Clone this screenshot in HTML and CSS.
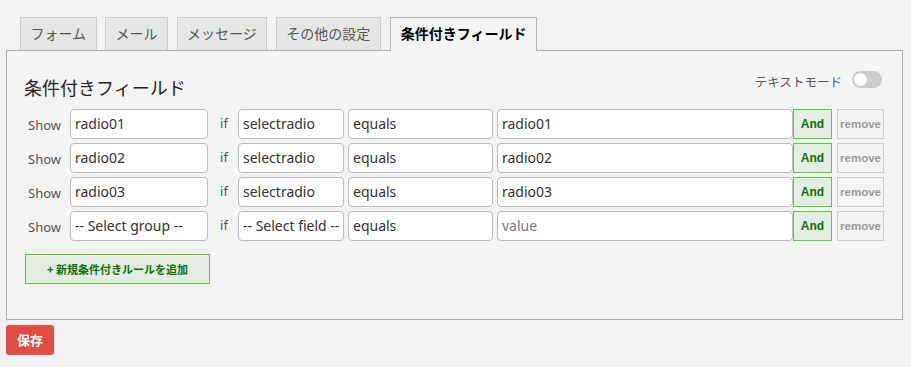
FILE: index.html
```html
<!DOCTYPE html>
<html lang="ja">
<head>
<meta charset="utf-8">
<title>条件付きフィールド</title>
<link rel="stylesheet" href="styles.css">
</head>
<body>
<div class="tabs">
  <div class="tab">フォーム</div>
  <div class="tab">メール</div>
  <div class="tab">メッセージ</div>
  <div class="tab">その他の設定</div>
  <div class="tab active">条件付きフィールド</div>
</div>
<div class="panel">
  <div class="header">
    <h2 class="title">条件付きフィールド</h2>
    <div class="mode">
      <span class="mode-label">テキストモード</span>
      <span class="toggle"><span class="knob"></span></span>
    </div>
  </div>
  <div class="rules">
    <div class="rule">
      <span class="show">Show</span>
      <div class="field f-group">radio01</div>
      <span class="if">if</span>
      <div class="field f-if">selectradio</div>
      <div class="field f-op">equals</div>
      <div class="field f-val">radio01</div>
      <div class="btn-and">And</div>
      <div class="btn-remove">remove</div>
    </div>
    <div class="rule">
      <span class="show">Show</span>
      <div class="field f-group">radio02</div>
      <span class="if">if</span>
      <div class="field f-if">selectradio</div>
      <div class="field f-op">equals</div>
      <div class="field f-val">radio02</div>
      <div class="btn-and">And</div>
      <div class="btn-remove">remove</div>
    </div>
    <div class="rule">
      <span class="show">Show</span>
      <div class="field f-group">radio03</div>
      <span class="if">if</span>
      <div class="field f-if">selectradio</div>
      <div class="field f-op">equals</div>
      <div class="field f-val">radio03</div>
      <div class="btn-and">And</div>
      <div class="btn-remove">remove</div>
    </div>
    <div class="rule">
      <span class="show">Show</span>
      <div class="field f-group">-- Select group --</div>
      <span class="if">if</span>
      <div class="field f-if">-- Select field --</div>
      <div class="field f-op">equals</div>
      <div class="field f-val placeholder">value</div>
      <div class="btn-and">And</div>
      <div class="btn-remove">remove</div>
    </div>
  </div>
  <div class="add-rule">+ 新規条件付きルールを追加</div>
</div>
<div class="save">保存</div>
</body>
</html>
```
FILE: styles.css
```css
* { box-sizing: border-box; }
body {
  margin: 0;
  background: #f1f1f1;
  font-family: "Noto Sans", "Noto Sans CJK JP", sans-serif;
  color: #333;
}
.tabs {
  display: flex;
  padding-left: 20px;
  padding-top: 17px;
  gap: 8.5px;
  position: relative;
  z-index: 1;
  margin-bottom: -1px;
}
.tab {
  height: 33px;
  line-height: 31px;
  padding: 0 9.5px;
  border: 1px solid #cccccc;
  border-bottom: none;
  background: #e5e5e5;
  color: #555;
  font-family: "Noto Sans CJK JP", sans-serif;
  font-size: 14px;
}
.tab.active {
  height: 34px;
  margin-left: 1px;
  background: #f4f4f4;
  border-color: #b4b4b4;
  color: #000;
  font-weight: bold;
}
.panel {
  margin: 0 8px 0 6px;
  height: 270px;
  background: #f4f4f4;
  border: 1px solid #aaaaaa;
  padding: 0 18px 0 17px;
}
.header {
  height: 58px;
  display: flex;
  justify-content: space-between;
  align-items: flex-start;
  padding-top: 20px;
}
.title {
  margin: 3px 0 0 0;
  font-family: "Noto Sans CJK JP", sans-serif;
  font-weight: normal;
  font-size: 18px;
  line-height: 26px;
  color: #222;
}
.mode {
  display: flex;
  align-items: center;
  gap: 10px;
  margin-right: 2px;
  height: 17px;
}
.mode-label {
  font-family: "Noto Sans CJK JP", sans-serif;
  font-size: 12.5px;
  color: #555;
  line-height: 17px;
  margin-top: 3px;
}
.toggle {
  width: 30px;
  height: 17px;
  border-radius: 9px;
  background: #cccccc;
  display: flex;
  align-items: center;
  padding-left: 2px;
}
.knob {
  width: 13px;
  height: 13px;
  border-radius: 50%;
  background: #fff;
}
.rules {
  display: flex;
  flex-direction: column;
  gap: 4px;
}
.rule {
  display: flex;
  height: 30px;
  align-items: center;
}
.show {
  width: 46px;
  padding-left: 4px;
  font-size: 13px;
  color: #555;
  padding-top: 2px;
}
.if {
  width: 30px;
  text-align: center;
  font-size: 13px;
  color: #555;
  padding-left: 2px;
  padding-bottom: 2px;
}
.field {
  height: 30px;
  line-height: 28px;
  border: 1px solid #bbbbbb;
  border-radius: 4px;
  background: #fff;
  padding: 0 4px;
  font-size: 14px;
  color: #333;
  white-space: nowrap;
  overflow: hidden;
}
.f-group { width: 138px; }
.f-if { width: 106px; }
.f-op { width: 145px; margin-left: 4px; }
.f-val { width: 296px; margin-left: 4px; }
.placeholder { color: #777; }
.btn-and {
  width: 39px;
  height: 30px;
  line-height: 28px;
  text-align: center;
  border: 1px solid #4fd32f;
  background: #e2eee2;
  color: #0d6e0d;
  font-family: "Liberation Sans", Arial, sans-serif;
  font-weight: bold;
  font-size: 12px;
}
.btn-remove {
  width: 47px;
  height: 30px;
  line-height: 28px;
  margin-left: 5px;
  text-align: center;
  border: 1px solid #cccccc;
  background: #f4f4f4;
  color: #999;
  font-family: "Liberation Sans", Arial, sans-serif;
  font-weight: bold;
  font-size: 11.5px;
}
.add-rule {
  width: 185px;
  height: 30px;
  line-height: 28px;
  margin: 13px 0 0 1px;
  text-align: center;
  border: 1px solid #55cc33;
  background: #e0ede0;
  color: #0d6e0d;
  font-family: "Noto Sans CJK JP", sans-serif;
  font-weight: bold;
  font-size: 11px;
}
.save {
  width: 48px;
  height: 30px;
  line-height: 30px;
  margin: 5px 0 0 6px;
  text-align: center;
  background: #e14d43;
  border-radius: 3px;
  color: #fff;
  font-family: "Noto Sans CJK JP", sans-serif;
  font-weight: bold;
  font-size: 13px;
}
```
